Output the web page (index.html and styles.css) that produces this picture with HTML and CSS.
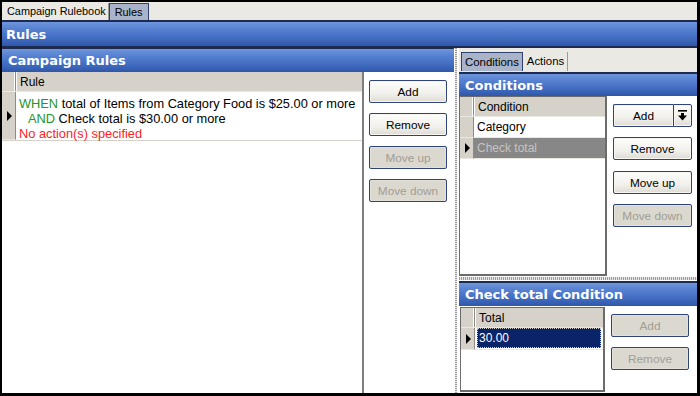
FILE: index.html
```html
<!DOCTYPE html>
<html>
<head>
<meta charset="utf-8">
<link rel="stylesheet" href="styles.css">
</head>
<body>
<div class="app">
  <div class="doc-tabs">
    <div class="doc-tab">Campaign Rulebook</div>
    <div class="doc-tab active">Rules</div>
  </div>
  <div class="title-bar main-title">Rules</div>
  <div class="workspace">
    <section class="left-pane">
      <div class="title-bar pane-title">Campaign Rules</div>
      <div class="left-body">
        <div class="grid rules-grid">
          <div class="grid-head"><div class="sel"></div><div class="col">Rule</div></div>
          <div class="grid-row rule-row">
            <div class="sel"><span class="arrow"></span></div>
            <div class="cell">
              <div class="line"><span class="kw">WHEN</span> total of Items from Category Food is $25.00 or more</div>
              <div class="line indent"><span class="kw">AND</span> Check total is $30.00 or more</div>
              <div class="line warn">No action(s) specified</div>
            </div>
          </div>
        </div>
        <div class="divider"></div>
        <div class="btn-col left-btns">
          <button class="btn">Add</button>
          <button class="btn">Remove</button>
          <button class="btn" disabled>Move up</button>
          <button class="btn" disabled>Move down</button>
        </div>
      </div>
    </section>
    <div class="vsplit"></div>
    <section class="right-pane">
      <div class="sub-tabs">
        <div class="sub-tab active">Conditions</div>
        <div class="sub-tab">Actions</div>
      </div>
      <div class="title-bar sub-title">Conditions</div>
      <div class="cond-body">
        <div class="grid cond-grid">
          <div class="grid-head"><div class="sel"></div><div class="col">Condition</div></div>
          <div class="grid-row small-row"><div class="sel"></div><div class="cell">Category</div></div>
          <div class="grid-row small-row current"><div class="sel"><span class="arrow"></span></div><div class="cell">Check total</div></div>
        </div>
        <div class="btn-col right-btns">
          <div class="split-btn">
            <button class="btn split-main">Add</button>
            <button class="btn split-drop"><svg width="9" height="11" viewBox="0 0 9 11"><rect x="0" y="0" width="9" height="1.6" fill="#000"/><rect x="3" y="3" width="3" height="3" fill="#000"/><polygon points="0,5.5 9,5.5 4.5,10.5" fill="#000"/></svg></button>
          </div>
          <button class="btn">Remove</button>
          <button class="btn">Move up</button>
          <button class="btn" disabled>Move down</button>
        </div>
      </div>
      <div class="hsplit"></div>
      <div class="title-bar sub-title2">Check total Condition</div>
      <div class="total-body">
        <div class="grid total-grid">
          <div class="grid-head"><div class="sel"></div><div class="col">Total</div></div>
          <div class="grid-row small-row"><div class="sel"><span class="arrow"></span></div><div class="cell focus"><span class="focus-box">30.00</span></div></div>
        </div>
        <div class="btn-col total-btns">
          <button class="btn" disabled>Add</button>
          <button class="btn" disabled>Remove</button>
        </div>
      </div>
    </section>
  </div>
</div>
</body>
</html>
```
FILE: styles.css
```css
* { box-sizing: border-box; }
html, body { margin: 0; padding: 0; }
body {
  background: #000;
  width: 700px;
  height: 396px;
  overflow: hidden;
  font-family: "Liberation Sans", Arial, sans-serif;
  font-size: 12px;
  color: #000;
}
.app {
  margin: 2px 3px 3px 2px;
  width: 695px;
  height: 391px;
  background: #fff;
  display: flex;
  flex-direction: column;
  overflow: hidden;
}
.doc-tabs {
  height: 18px;
  background: #ebe9e4;
  display: flex;
  align-items: flex-end;
  flex: none;
}
.doc-tab {
  height: 17px;
  padding: 0 2px 0 5px;
  line-height: 16px;
  font-size: 10.9px;
  border-right: 1px solid #9c9a94;
}
.doc-tab.active {
  background: #a9b3c9;
  border: 1px solid #30406c;
  border-bottom: none;
  padding: 0 5px 0 5px;
}
.title-bar {
  flex: none;
  display: flex;
  align-items: center;
  padding-left: 5px;
  font-family: "DejaVu Sans", sans-serif;
  font-weight: bold;
  font-size: 13px;
  color: #fff;
  background: linear-gradient(to bottom, #6f96dd 0%, #5a84d2 25%, #4570c4 60%, #2f57aa 100%);
}
.main-title {
  height: 28px;
  border-top: 2px solid #1d2b50;
  border-bottom: 2px solid #1d2b50;
  padding-left: 4px;
}
.workspace {
  flex: 1;
  display: flex;
  min-height: 0;
}
.left-pane {
  width: 452px;
  display: flex;
  flex-direction: column;
}
.pane-title {
  height: 24px;
  border-top: 1px solid #1d2b50;
  padding-left: 6px;
}
.left-body {
  flex: 1;
  display: flex;
}
.grid { background: #fff; }
.rules-grid { width: 360px; }
.grid-head {
  height: 20px;
  display: flex;
  background: #d6d2ca;
  border-bottom: 1px solid #eae8e3;
}
.grid-head .sel {
  width: 14px;
  border-right: 1px solid #8e8b84;
  box-shadow: inset -1px 0 #fff;
}
.grid-head .col {
  flex: 1;
  padding-left: 3px;
  line-height: 20px;
  border-left: 1px solid #fff;
}
.grid-row { display: flex; }
.grid-row .sel {
  width: 14px;
  background: #d6d2ca;
  border-right: 1px solid #8e8b84;
  display: flex;
  align-items: center;
  justify-content: center;
  border-bottom: 1px solid #eae8e3;
}
.arrow {
  width: 0; height: 0;
  border-left: 5px solid #000;
  border-top: 5px solid transparent;
  border-bottom: 5px solid transparent;
  margin-left: 1px;
}
.rule-row { height: 49px; border-bottom: 1px solid #d6d2ca; }
.rule-row .cell {
  flex: 1;
  padding: 4px 0 0 3px;
  line-height: 15px;
  font-size: 12.8px;
  white-space: nowrap;
}
.kw { color: #24952a; }
.indent { padding-left: 9px; }
.warn { color: #ff2222; }
.divider { width: 2px; background: #7e7e7e; }
.btn-col {
  display: flex;
  flex-direction: column;
  align-items: flex-start;
}
.left-btns { width: 90px; padding: 8px 0 0 5px; gap: 10px; }
.btn {
  width: 78px;
  height: 23px;
  padding: 0;
  font-family: "Liberation Sans", Arial, sans-serif;
  font-size: 11.8px;
  color: #000;
  border: 1px solid #2f4378;
  border-radius: 2px;
  background: linear-gradient(to bottom, #fdfdfb 0%, #f1f0ec 60%, #dedbd2 100%);
  box-shadow: inset 0 0 0 1px #f6f5f1;
}
.btn:disabled {
  color: #a19d93;
  background: #dbd8d0;
  box-shadow: inset 0 0 0 1px #e3e0d9;
}
.vsplit {
  width: 4px;
  border-left: 1px solid #fff;
  border-right: 1px solid #fff;
  background: repeating-linear-gradient(to bottom, #9b9b9b 0 1px, #e6e6e6 1px 2px);
}
.right-pane {
  width: 239px;
  display: flex;
  flex-direction: column;
  padding-left: 1px;
}
.sub-tabs {
  height: 24px;
  background: #ebe9e4;
  display: flex;
  align-items: flex-end;
  padding-left: 2px;
  flex: none;
}
.sub-tab {
  height: 19px;
  line-height: 18px;
  padding: 0 3px 0 4px;
  font-size: 11.4px;
  border-right: 1px solid #9c9a94;
  margin-bottom: 1px;
}
.sub-tab.active {
  background: #a9b3c9;
  border: 1px solid #30406c;
  border-bottom: none;
  padding: 0 3px;
  margin-bottom: 1px;
}
.sub-title {
  height: 24px;
  border-top: 2px solid #1d2b50;
  padding-left: 6px;
}
.cond-body {
  height: 180px;
  display: flex;
  flex: none;
}
.cond-grid {
  width: 148px;
  height: 180px;
  border-right: 2px solid #6b6b6b;
  border-bottom: 2px solid #6b6b6b;
  border-left: 1px solid #6b6b6b;
  border-top: 1px solid #6b6b6b;
}
.small-row { height: 21px; }
.small-row .cell {
  flex: 1;
  padding-left: 3px;
  line-height: 20px;
  border-bottom: 1px solid #eae8e3;
}
.grid-row.current .cell {
  background: #878787;
  color: #c4c4c4;
}
.right-btns { padding: 8px 0 0 6px; gap: 10px; }
.right-btns .btn { width: 79px; }
.right-btns .btn:nth-child(3) { margin-top: 1px; }
.split-btn { display: flex; width: 79px; }
.split-btn .split-main {
  width: 60px;
  border-right: none;
  border-radius: 2px 0 0 2px;
}
.split-btn .split-drop {
  width: 19px;
  border-radius: 0 2px 2px 0;
  display: flex;
  align-items: center;
  justify-content: center;
}
.hsplit {
  height: 5px;
  flex: none;
  border-top: 1px solid #fff;
  border-bottom: 1px solid #fff;
  background: repeating-linear-gradient(to right, #9b9b9b 0 1px, #e6e6e6 1px 2px);
}
.sub-title2 {
  height: 25px;
  border-top: 2px solid #1d2b50;
  padding-left: 6px;
}
.total-body {
  flex: 1;
  display: flex;
}
.total-grid {
  width: 145px;
  height: 85px;
  margin: 1px 0 0 1px;
  border-left: 1px solid #6b6b6b;
  border-top: 1px solid #6b6b6b;
  border-right: 2px solid #6b6b6b;
  border-bottom: 2px solid #6b6b6b;
}
.total-grid .small-row { height: 22px; }
.total-grid .cell.focus {
  padding: 0 2px 0 2px;
  display: flex;
}
.focus-box {
  flex: 1;
  background: #0a246a;
  color: #fff;
  border: 1px dotted #c8c8c8;
  line-height: 19px;
  padding-left: 1px;
  margin-bottom: 1px;
}
.total-btns { padding: 8px 0 0 6px; gap: 10px; }
.total-btns .btn { width: 78px; }
```
